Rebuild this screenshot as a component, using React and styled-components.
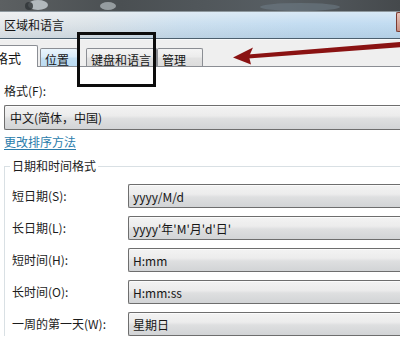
import React from "react";
import styled, { createGlobalStyle } from "styled-components";

const Global = createGlobalStyle`
  html, body { margin: 0; padding: 0; background: #ffffff; }
  body { width: 400px; height: 340px; overflow: hidden; }
`;

const Screen = styled.div`
  position: relative;
  width: 400px;
  height: 340px;
  overflow: hidden;
  font-family: "Noto Sans CJK SC", "Noto Sans", sans-serif;
  font-size: 12px;
  color: #1c1c1c;
`;

const Window = styled.div`
  width: 400px;
  height: 340px;
  display: flex;
  flex-direction: column;
`;

const Desktop = styled.div`
  height: 11px;
  flex: none;
  display: block;
  line-height: 0;
`;

const TitleBar = styled.div`
  height: 26px;
  flex: none;
  display: flex;
  align-items: flex-start;
  border-top: 1px solid #8e989e;
  border-bottom: 1px solid #4c5f6e;
  background:
    linear-gradient(to bottom, rgba(255,255,255,0.35) 0%, rgba(255,255,255,0) 45%, rgba(70,110,140,0.12) 100%),
    linear-gradient(to right, #e6e9eb 0%, #dce3e8 22%, #cde0ef 45%, #c4ddf1 75%, #c2dcf1 100%);
`;

const Title = styled.div`
  padding-left: 4px;
  line-height: 26px;
  font-size: 12px;
  color: #151515;
`;

const CloseEdge = styled.div`
  margin-left: auto;
  width: 3px;
  height: 18px;
  border: 1px solid #7b3a30;
  border-right: none;
  border-radius: 2px 0 0 2px;
  background: linear-gradient(#e7c4bb, #c98f82);
`;

const TabArea = styled.div`
  flex: none;
  background: #efefef;
  padding-top: 5px;
  border-top: 1px solid #f7f9fa;
`;

const TabRow = styled.div`
  display: flex;
  align-items: flex-end;
  height: 21px;
  margin-left: -12px;
  border-bottom: 1px solid #8b8e94;
`;

const Tab = styled.div`
  box-sizing: border-box;
  width: ${(p) => p.$w}px;
  margin-left: ${(p) => p.$ml || 0}px;
  height: ${(p) => (p.$active ? 22 : 18)}px;
  margin-bottom: ${(p) => (p.$active ? -1 : 0)}px;
  padding: ${(p) => (p.$active ? "1px 0 0 6px" : "3px 0 0 4px")};
  display: flex;
  align-items: center;
  border: 1px solid #8b8e94;
  border-bottom: none;
  border-radius: 2px 2px 0 0;
  position: relative;
  z-index: ${(p) => (p.$active ? 1 : 0)};
  font-size: ${(p) => (p.$active ? 13 : 12)}px;
  color: #151515;
  background: ${(p) =>
    p.$active
      ? "#ffffff"
      : p.$hover
      ? "linear-gradient(#eaf5fc 0%, #d9ecf9 45%, #c3e0f4 55%, #bcdcf3 100%)"
      : "linear-gradient(#f4f4f4 0%, #ececec 45%, #e2e2e2 55%, #dcdcdc 100%)"};
`;

const Panel = styled.div`
  flex: 1;
  background: #ffffff;
  padding: 16px 0 0 4px;
  display: flex;
  flex-direction: column;
  align-items: flex-start;
  min-height: 0;
`;

const FieldLabel = styled.div`
  line-height: 16px;
`;

const Combo = styled.div`
  box-sizing: border-box;
  flex: none;
  width: ${(p) => p.$w}px;
  height: ${(p) => p.$h}px;
  margin-top: ${(p) => p.$mt || 0}px;
  padding-left: ${(p) => p.$pl}px;
  display: flex;
  align-items: center;
  border: 1px solid #6e6e6e;
  border-right: none;
  border-radius: 2px 0 0 2px;
  box-shadow: inset 0 1px 0 #fbfbfb;
  background: linear-gradient(#f3f3f3 0%, #ececec 42%, #dedfe0 55%, #d2d4d6 100%);
  color: #161616;
  white-space: nowrap;
`;

const Link = styled.a`
  margin-top: 4px;
  line-height: 16px;
  color: #2a7cab;
  text-decoration: underline;
  text-underline-offset: 2px;
  cursor: pointer;
`;

const Group = styled.fieldset`
  margin: 8px 0 0 0;
  padding: 10px 0 0 7px;
  border: 1px solid #d9e0e4;
  border-right: none;
  border-bottom: none;
  align-self: stretch;
  min-inline-size: 0;
  display: flex;
  flex-direction: column;
  gap: 8px;
`;

const Legend = styled.legend`
  padding: 0 2px;
  margin-left: -2px;
  line-height: 16px;
  color: #1c1c1c;
`;

const Row = styled.div`
  display: flex;
  align-items: center;
  height: 24px;
`;

const RowLabel = styled.div`
  width: 116px;
  flex: none;
  line-height: 16px;
`;

const Frame = styled.div`
  position: absolute;
  left: 77px;
  top: 32px;
  width: 79px;
  height: 55px;
  box-sizing: border-box;
  border: 3px solid #0c0c0c;
  pointer-events: none;
  z-index: 5;
`;

const ArrowLayer = styled.svg`
  position: absolute;
  left: 0;
  top: 0;
  pointer-events: none;
  z-index: 6;
`;

const rows = [
  ["短日期(S):", "yyyy/M/d"],
  ["长日期(L):", "yyyy'年'M'月'd'日'"],
  ["短时间(H):", "H:mm"],
  ["长时间(O):", "H:mm:ss"],
  ["一周的第一天(W):", "星期日"],
];

export default function App() {
  return (
    <>
      <Global />
      <Screen>
        <Window>
          <Desktop>
            <svg width="400" height="11" viewBox="0 0 400 11">
              <defs>
                <linearGradient id="dk" x1="0" x2="1" y1="0" y2="0">
                  <stop offset="0" stopColor="#5c6062" />
                  <stop offset="0.3" stopColor="#4a4f52" />
                  <stop offset="0.7" stopColor="#575e63" />
                  <stop offset="1" stopColor="#45494c" />
                </linearGradient>
              </defs>
              <rect width="400" height="11" fill="url(#dk)" />
              <ellipse cx="38" cy="5" rx="10" ry="5" fill="#c9d1d6" opacity="0.8" />
              <ellipse cx="29" cy="6" rx="4" ry="4" fill="#2e3336" opacity="0.8" />
              <ellipse cx="108" cy="6" rx="8" ry="4" fill="#b5bcc0" opacity="0.7" />
              <ellipse cx="300" cy="7" rx="40" ry="4" fill="#6d7a84" opacity="0.6" />
            </svg>
          </Desktop>
          <TitleBar>
            <Title>区域和语言</Title>
            <CloseEdge />
          </TitleBar>
          <TabArea>
            <TabRow>
              <Tab $active $w={50}>格式</Tab>
              <Tab $hover $w={38} $ml={2}>位置</Tab>
              <Tab $w={71} $ml={8}>键盘和语言</Tab>
              <Tab $w={46}>管理</Tab>
            </TabRow>
          </TabArea>
          <Panel>
            <FieldLabel>格式(F):</FieldLabel>
            <Combo $w={420} $h={25} $mt={6} $pl={5}>中文(简体，中国)</Combo>
            <Link>更改排序方法</Link>
            <Group>
              <Legend>日期和时间格式</Legend>
              {rows.map(([label, value]) => (
                <Row key={label}>
                  <RowLabel>{label}</RowLabel>
                  <Combo $w={290} $h={24} $pl={4}>{value}</Combo>
                </Row>
              ))}
            </Group>
          </Panel>
        </Window>
        <Frame />
        <ArrowLayer width="400" height="340" viewBox="0 0 400 340">
          <polygon points="402,41.8 402,47.2 248,58.6 248,54.6" fill="#8a1212" />
          <polygon points="233,57.5 253,47.5 249,56.5 251,64.5" fill="#8a1212" />
        </ArrowLayer>
      </Screen>
    </>
  );
}
